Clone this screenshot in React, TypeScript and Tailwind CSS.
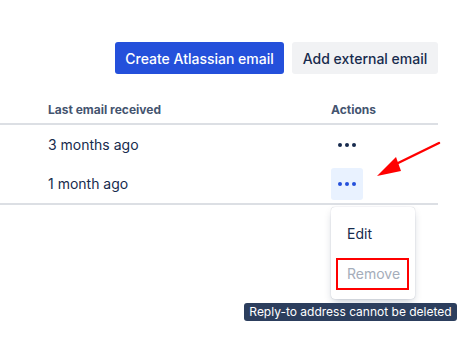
import React from 'react';

interface EmailRow {
  id: string;
  lastReceived: string;
  active: boolean;
}

const rows: EmailRow[] = [
  { id: 'a', lastReceived: '3 months ago', active: false },
  { id: 'b', lastReceived: '1 month ago', active: true },
];

const Dots: React.FC<{ color: string }> = ({ color }) => (
  <svg width="18" height="4" viewBox="0 0 18 4">
    <circle cx="2" cy="2" r="2" fill={color} />
    <circle cx="9" cy="2" r="2" fill={color} />
    <circle cx="16" cy="2" r="2" fill={color} />
  </svg>
);

const App: React.FC = () => {
  return (
    <div
      className="relative w-[459px] h-[340px] overflow-hidden bg-white text-[#172B4D]"
      style={{ fontFamily: 'Inter, "Noto Sans", sans-serif' }}
    >
      {/* buttons */}
      <div className="flex justify-end gap-2 pt-[42px] pr-[21px]">
        <button className="h-8 w-[169px] rounded-[3px] bg-[#2450DB] text-[14px] font-medium text-white">
          Create Atlassian email
        </button>
        <button className="h-8 w-[146px] rounded-[3px] bg-[#F1F2F4] text-[14px] font-medium text-[#172B4D]">
          Add external email
        </button>
      </div>

      {/* table */}
      <div className="w-[438px] mt-[26px]">
        <div className="flex h-[20px] items-center border-b-2 border-[#DCDFE4] pb-[3px] box-content text-[12px] font-bold text-[#44546F]">
          <div className="w-[331px] pl-[48px]">Last email received</div>
          <div>Actions</div>
        </div>
        <div className="border-b-2 border-[#DCDFE4]">
          {rows.map((row) => (
            <div key={row.id} className="flex h-[39px] items-center text-[14px]">
              <div className="w-[331px] pl-[48px]">{row.lastReceived}</div>
              <div
                className={`flex h-8 w-8 items-center justify-center rounded-[3px] ${
                  row.active ? 'bg-[#E9F2FF]' : ''
                }`}
              >
                <Dots color={row.active ? '#2450DB' : '#172B4D'} />
              </div>
            </div>
          ))}
        </div>
      </div>

      {/* dropdown menu */}
      <div className="absolute left-[331px] top-[207px] w-[84px] rounded-[4px] bg-white py-[6px] shadow-[0_0_1px_rgba(9,30,66,0.31),0_4px_8px_-2px_rgba(9,30,66,0.25)]">
        <div className="flex h-10 items-center pl-4 text-[14px] text-[#172B4D]">Edit</div>
        <div className="flex h-10 items-center pl-4 text-[14px] text-[#A5ADBA]">Remove</div>
      </div>

      {/* highlight box */}
      <div className="absolute left-[336px] top-[258px] h-[32px] w-[73px] border-2 border-[#FF0000]" />

      {/* tooltip */}
      <div className="absolute left-[244px] top-[303px] flex h-[18px] w-[213px] items-center justify-center rounded-[3px] bg-[#2C3E5D] text-[12px] text-white">
        Reply-to address cannot be deleted
      </div>

      {/* red arrow */}
      <svg className="absolute left-0 top-0" width="459" height="340" viewBox="0 0 459 340">
        <line x1="439" y1="143" x2="392" y2="166" stroke="#FF0000" strokeWidth="2.5" strokeLinecap="round" />
        <polygon points="377,176 396,157 401,171" fill="#FF0000" />
      </svg>
    </div>
  );
};

export default App;
